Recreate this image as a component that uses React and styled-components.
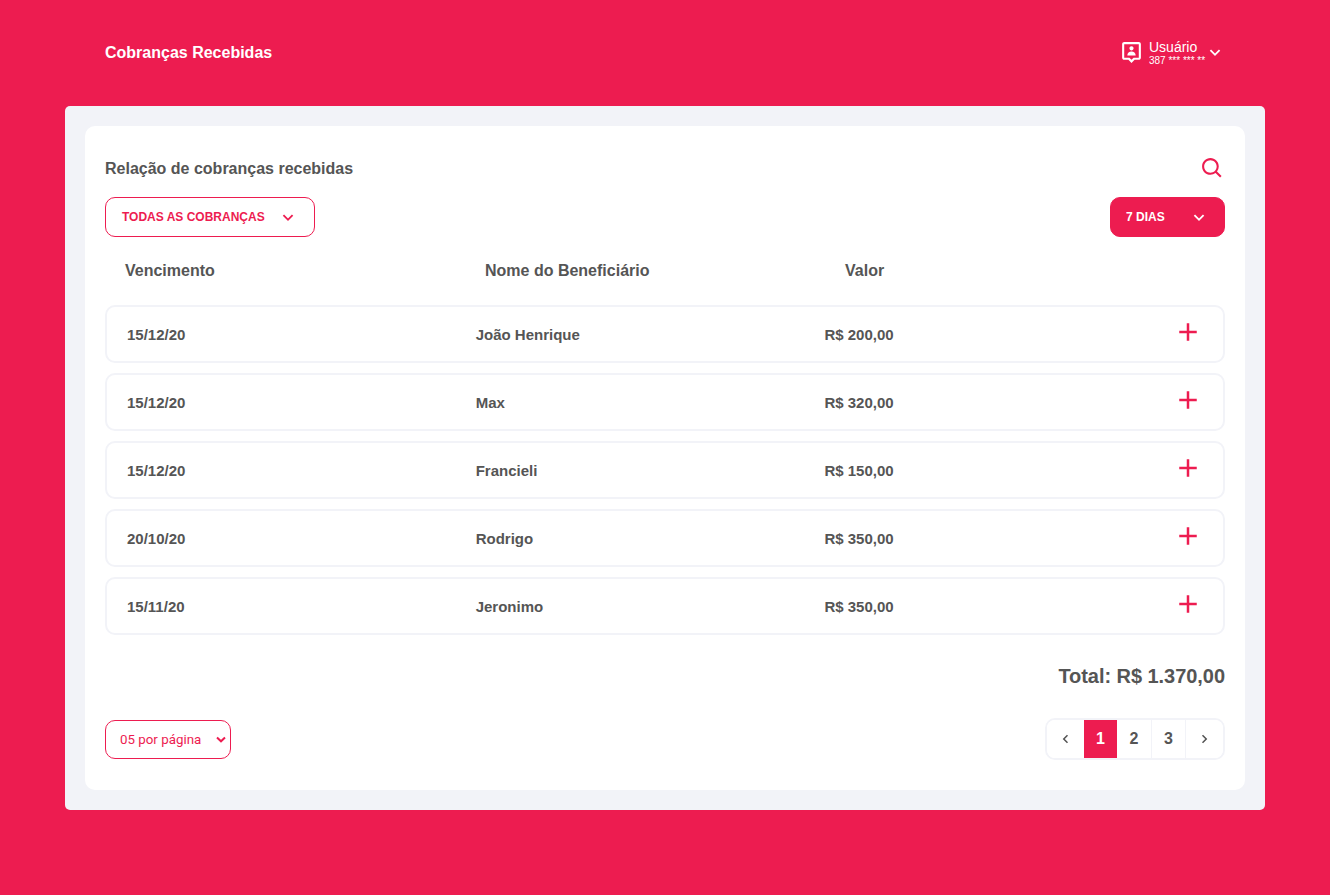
import React from "react";
import styled, { createGlobalStyle } from "styled-components";
import {
  BiChevronDown,
  BiChevronLeft,
  BiChevronRight,
  BiPlus,
  BiSearch,
  BiUserPin,
} from "react-icons/bi";

const pink = "#ed1c50";
const grey = "#f2f3f8";
const ink = "#555555";

const GlobalStyle = createGlobalStyle`
  * { box-sizing: border-box; margin: 0; padding: 0; }
  body {
    background: ${pink};
    font-family: "Liberation Sans", Arial, sans-serif;
    color: ${ink};
  }
  svg { display: block; flex: none; }
`;

const Page = styled.div`
  width: 1200px;
  height: 895px;
  margin: 0 auto;
`;

const Header = styled.header`
  display: flex;
  align-items: center;
  justify-content: space-between;
  height: 106px;
  padding: 0 39px 0 40px;
  color: #fff;
`;

const Title = styled.h1`
  font-size: 16px;
  line-height: 20px;
`;

const UserMenu = styled.div`
  display: flex;
  align-items: center;
  padding-bottom: 2px;
`;

const UserText = styled.div`
  margin: 2px 0 0 5px;
  width: 55px;
  white-space: nowrap;
`;

const UserName = styled.div`
  font-size: 14px;
  line-height: 14px;
`;

const UserDoc = styled.div`
  font-size: 10px;
  line-height: 13px;
`;

const Frame = styled.main`
  padding: 20px;
  border-radius: 5px;
  background: ${grey};
`;

const Card = styled.section`
  height: 664px;
  padding: 29px 20px 0;
  border-radius: 10px;
  background: #fff;
`;

const Bar = styled.div`
  display: flex;
  align-items: center;
  justify-content: space-between;
`;

const CardHead = styled(Bar)`
  height: 26px;
`;

const Heading = styled.h2`
  padding-top: 2px;
  font-size: 16px;
  line-height: 20px;
`;

const Filters = styled(Bar)`
  margin-top: 16px;
`;

const Dropdown = styled.button`
  display: flex;
  align-items: center;
  justify-content: space-between;
  width: ${(p) => p.$width}px;
  height: 40px;
  padding: 0 ${(p) => (p.$filled ? 14 : 15)}px 0 ${(p) => (p.$filled ? 15 : 16)}px;
  border: 1px solid ${pink};
  border-radius: 10px;
  background: ${(p) => (p.$filled ? pink : "#fff")};
  color: ${(p) => (p.$filled ? "#fff" : pink)};
  font: bold 12px "Liberation Sans", Arial, sans-serif;
`;

const Columns = styled.div`
  display: grid;
  grid-template-columns: repeat(3, 360px);
  height: 68px;
  padding: 24px 20px 0;
  font-size: 16px;
  line-height: 20px;
  font-weight: bold;
`;

const List = styled.div`
  display: flex;
  flex-direction: column;
  gap: 10px;
`;

const Row = styled.div`
  display: grid;
  grid-template-columns: 348.7px 348.7px 1fr 30px;
  align-items: center;
  height: 58px;
  padding: 2px 20px 0;
  border: 2px solid ${grey};
  border-radius: 10px;
  font-size: 15px;
  line-height: 18px;
  font-weight: bold;
`;

const Expand = styled.span`
  color: ${pink};
  padding-bottom: 6px;
`;

const Total = styled.div`
  margin-top: 29px;
  font-size: 20px;
  line-height: 24px;
  font-weight: bold;
  letter-spacing: -0.05px;
  text-align: right;
`;

const Footer = styled(Bar)`
  margin-top: 30px;
`;

const PageSize = styled.button`
  display: flex;
  align-items: center;
  justify-content: space-between;
  width: 126px;
  height: 39px;
  padding: 0 4px 0 14px;
  margin-top: 1px;
  border: 1px solid ${pink};
  border-radius: 10px;
  background: #fff;
  color: ${pink};
  font: 13.33px Roboto, sans-serif;
`;

const Pager = styled.nav`
  display: flex;
  height: 42px;
  border: 2px solid ${grey};
  border-radius: 10px;
  overflow: hidden;
`;

const PageButton = styled.span`
  display: flex;
  align-items: center;
  justify-content: center;
  width: ${(p) => p.$width || 34}px;
  border-left: ${(p) => (p.$divided ? `1px solid ${grey}` : "0")};
  background: ${(p) => (p.$active ? pink : "#fff")};
  color: ${(p) => (p.$active ? "#fff" : ink)};
  font-size: 16px;
  font-weight: bold;
`;

const NextButton = styled(PageButton)`
  padding-right: 2px;
`;

const charges = [
  ["15/12/20", "João Henrique", "R$ 200,00"],
  ["15/12/20", "Max", "R$ 320,00"],
  ["15/12/20", "Francieli", "R$ 150,00"],
  ["20/10/20", "Rodrigo", "R$ 350,00"],
  ["15/11/20", "Jeronimo", "R$ 350,00"],
];

export default function App() {
  return (
    <Page>
      <GlobalStyle />
      <Header>
        <Title>Cobranças Recebidas</Title>
        <UserMenu>
          <BiUserPin size={25} />
          <UserText>
            <UserName>Usuário</UserName>
            <UserDoc>387 *** *** **</UserDoc>
          </UserText>
          <BiChevronDown size={22} />
        </UserMenu>
      </Header>
      <Frame>
        <Card>
          <CardHead>
            <Heading>Relação de cobranças recebidas</Heading>
            <BiSearch size={25} color={pink} />
          </CardHead>
          <Filters>
            <Dropdown $width={210}>
              TODAS AS COBRANÇAS
              <BiChevronDown size={22} />
            </Dropdown>
            <Dropdown $width={115} $filled>
              7 DIAS
              <BiChevronDown size={22} />
            </Dropdown>
          </Filters>
          <Columns>
            <span>Vencimento</span>
            <span>Nome do Beneficiário</span>
            <span>Valor</span>
          </Columns>
          <List>
            {charges.map(([date, name, value]) => (
              <Row key={name}>
                <span>{date}</span>
                <span>{name}</span>
                <span>{value}</span>
                <Expand>
                  <BiPlus size={30} />
                </Expand>
              </Row>
            ))}
          </List>
          <Total>Total: R$ 1.370,00</Total>
          <Footer>
            <PageSize>
              05 por página
              <svg width="10" height="8" viewBox="0 0 10 8" fill="none">
                <path d="M1 1.5l4 3.8 4-3.8" stroke="currentColor" strokeWidth="2" />
              </svg>
            </PageSize>
            <Pager>
              <PageButton $width={37}>
                <BiChevronLeft size={18} />
              </PageButton>
              <PageButton $width={33} $active>
                1
              </PageButton>
              <PageButton>2</PageButton>
              <PageButton $divided>3</PageButton>
              <NextButton $width={38} $divided>
                <BiChevronRight size={18} />
              </NextButton>
            </Pager>
          </Footer>
        </Card>
      </Frame>
    </Page>
  );
}
